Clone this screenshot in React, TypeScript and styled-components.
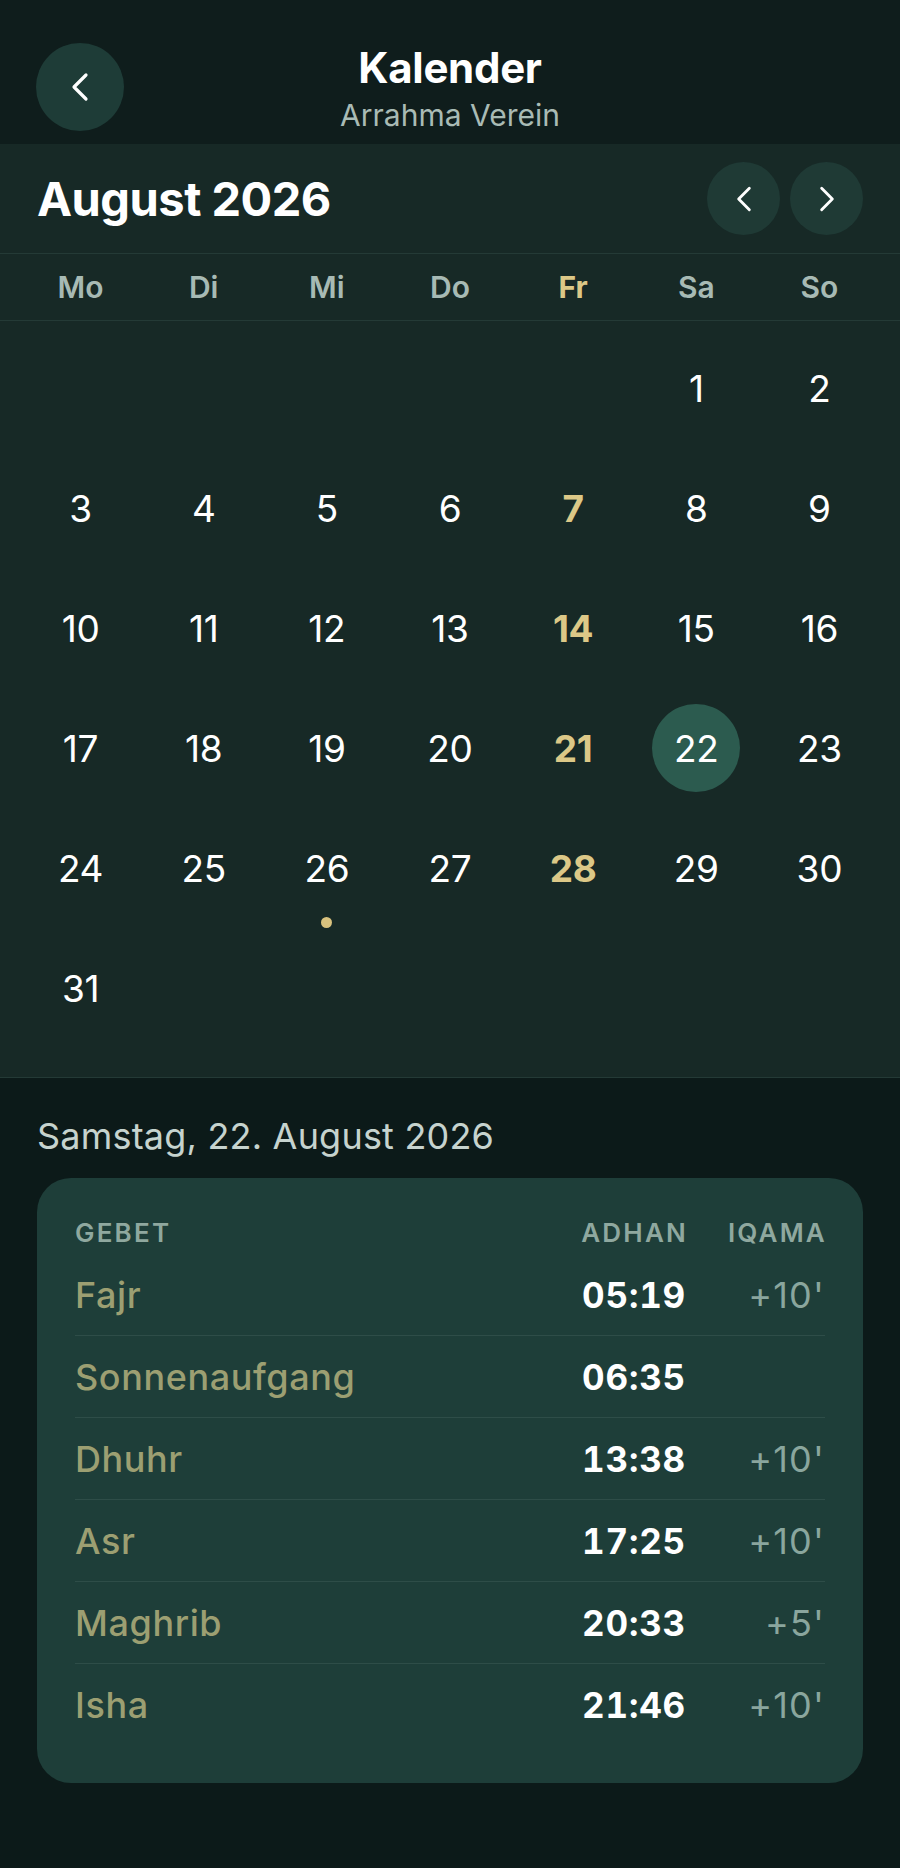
import React from "react"
import styled, { createGlobalStyle } from "styled-components"

const GlobalStyle = createGlobalStyle`
	html, body {
		margin: 0;
		padding: 0;
		background: #0c1a19;
	}
	body {
		font-family: Inter, "Noto Sans", "Liberation Sans", sans-serif;
		-webkit-font-smoothing: antialiased;
	}
	* {
		box-sizing: border-box;
	}
`

const Page = styled.div`
	width: 900px;
	min-height: 1868px;
	background: #0c1a19;
	color: #ffffff;
`

const Header = styled.header`
	height: 144px;
	display: grid;
	grid-template-columns: 88px 1fr 88px;
	align-items: start;
	padding: 43px 36px 0;
	background: #0f1d1c;
`

const CircleButton = styled.button<{ size: number; bg: string }>`
	width: ${(p) => p.size}px;
	height: ${(p) => p.size}px;
	border-radius: 50%;
	border: none;
	padding: 0;
	background: ${(p) => p.bg};
	display: flex;
	align-items: center;
	justify-content: center;
	color: #ffffff;
	cursor: pointer;
`

const TitleBlock = styled.div`
	display: flex;
	flex-direction: column;
	align-items: center;
	margin-top: 1px;
`

const Title = styled.h1`
	margin: 0;
	font-size: 42px;
	line-height: 48px;
	font-weight: 700;
	letter-spacing: -0.3px;
	color: #ffffff;
`

const Subtitle = styled.div`
	margin-top: 5px;
	font-size: 30px;
	line-height: 36px;
	font-weight: 400;
	color: #a9bbb5;
`

const CalendarSection = styled.section`
	background: #172926;
	border-bottom: 1px solid #243a36;
`

const MonthBar = styled.div`
	height: 110px;
	display: flex;
	align-items: center;
	justify-content: space-between;
	padding: 0 37px;
	border-bottom: 1px solid #243a36;
`

const MonthTitle = styled.h2`
	margin: 0;
	font-size: 47px;
	font-weight: 700;
	letter-spacing: -0.5px;
	color: #ffffff;
`

const NavGroup = styled.div`
	display: flex;
	gap: 10px;
`

const WeekRow = styled.div`
	height: 67px;
	display: grid;
	grid-template-columns: repeat(7, 1fr);
	align-items: center;
	padding: 0 19px;
	border-bottom: 1px solid #243a36;
`

const WeekDay = styled.div<{ friday?: boolean }>`
	text-align: center;
	font-size: 30px;
	font-weight: ${(p) => (p.friday ? 700 : 600)};
	color: ${(p) => (p.friday ? "#dcc887" : "#a7bab4")};
`

const DaysGrid = styled.div`
	display: grid;
	grid-template-columns: repeat(7, 1fr);
	grid-auto-rows: 120px;
	padding: 7px 19px 29px;
`

const DayCell = styled.div`
	position: relative;
	display: flex;
	align-items: center;
	justify-content: center;
`

const DayNumber = styled.div<{ friday?: boolean; selected?: boolean }>`
	width: 88px;
	height: 88px;
	border-radius: 50%;
	display: flex;
	align-items: center;
	justify-content: center;
	font-size: 37px;
	font-weight: ${(p) => (p.friday ? 700 : 400)};
	color: ${(p) => (p.friday ? "#dcc887" : "#ffffff")};
	background: ${(p) => (p.selected ? "#2c5b4f" : "transparent")};
	letter-spacing: -0.3px;
`

const EventDot = styled.span`
	position: absolute;
	left: 50%;
	top: calc(50% + 49px);
	width: 11px;
	height: 11px;
	margin-left: -5.5px;
	border-radius: 50%;
	background: #d9c27e;
`

const DetailSection = styled.section`
	padding: 37px 37px 0;
`

const DateLabel = styled.div`
	font-size: 36px;
	line-height: 42px;
	font-weight: 400;
	color: #c6d3ce;
	letter-spacing: 0.2px;
`

const PrayerCard = styled.div`
	margin-top: 21px;
	background: #1e3e39;
	border-radius: 34px;
	padding: 39px 38px 37px;
`

const PrayerGrid = styled.div`
	display: grid;
	grid-template-columns: 1fr 120px 139px;
	align-items: center;
`

const HeadCell = styled.div<{ right?: boolean }>`
	height: 37px;
	padding-bottom: 7px;
	display: flex;
	align-items: center;
	justify-content: ${(p) => (p.right ? "flex-end" : "flex-start")};
	font-size: 26px;
	font-weight: 600;
	letter-spacing: 2.2px;
	margin-right: ${(p) => (p.right ? "-2px" : "0")};
	color: #8fa89f;
`

const Cell = styled.div<{ right?: boolean; last?: boolean }>`
	height: 82px;
	display: flex;
	align-items: center;
	justify-content: ${(p) => (p.right ? "flex-end" : "flex-start")};
	border-bottom: ${(p) => (p.last ? "none" : "1px solid #2e4d48")};
`

const PrayerName = styled.span`
	font-size: 36px;
	font-weight: 500;
	letter-spacing: 0.6px;
	color: #9c9f72;
`

const AdhanTime = styled.span`
	font-size: 35px;
	font-weight: 700;
	letter-spacing: 0.8px;
	color: #ffffff;
	font-variant-numeric: tabular-nums;
`

const Iqama = styled.span`
	font-size: 36px;
	font-weight: 400;
	letter-spacing: 1.2px;
	color: #8aa69e;
`

const Chevron = ({ dir, w, h }: { dir: "left" | "right"; w: number; h: number }) => (
	<svg width={w} height={h} viewBox="0 0 18 30" fill="none">
		<polyline
			points={dir === "left" ? "15,3 3,15 15,27" : "3,3 15,15 3,27"}
			stroke="#ffffff"
			strokeWidth={3.2}
			strokeLinecap="round"
			strokeLinejoin="round"
		/>
	</svg>
)

const weekDays = ["Mo", "Di", "Mi", "Do", "Fr", "Sa", "So"]

const prayers = [
	{ name: "Fajr", adhan: "05:19", iqama: "+10'" },
	{ name: "Sonnenaufgang", adhan: "06:35", iqama: "" },
	{ name: "Dhuhr", adhan: "13:38", iqama: "+10'" },
	{ name: "Asr", adhan: "17:25", iqama: "+10'" },
	{ name: "Maghrib", adhan: "20:33", iqama: "+5'" },
	{ name: "Isha", adhan: "21:46", iqama: "+10'" },
]

// August 2026 starts on a Saturday
const leadingBlanks = 5
const daysInMonth = 31
const selectedDay = 22
const eventDays = [26]

export default function App() {
	const cells: (number | null)[] = [
		...Array.from({ length: leadingBlanks }, () => null),
		...Array.from({ length: daysInMonth }, (_, i) => i + 1),
	]

	return (
		<Page>
			<GlobalStyle />
			<Header>
				<CircleButton size={88} bg="#1e3c37" aria-label="Zurück">
					<Chevron dir="left" w={18} h={30} />
				</CircleButton>
				<TitleBlock>
					<Title>Kalender</Title>
					<Subtitle>Arrahma Verein</Subtitle>
				</TitleBlock>
				<div />
			</Header>

			<CalendarSection>
				<MonthBar>
					<MonthTitle>August 2026</MonthTitle>
					<NavGroup>
						<CircleButton size={73} bg="#1f3a35" aria-label="Vorheriger Monat">
							<Chevron dir="left" w={16} h={28} />
						</CircleButton>
						<CircleButton size={73} bg="#1f3a35" aria-label="Nächster Monat">
							<Chevron dir="right" w={16} h={28} />
						</CircleButton>
					</NavGroup>
				</MonthBar>

				<WeekRow>
					{weekDays.map((d) => (
						<WeekDay key={d} friday={d === "Fr"}>
							{d}
						</WeekDay>
					))}
				</WeekRow>

				<DaysGrid>
					{cells.map((day, i) => {
						if (day === null) return <DayCell key={`b${i}`} />
						const friday = i % 7 === 4
						return (
							<DayCell key={day}>
								<DayNumber friday={friday} selected={day === selectedDay}>
									{day}
								</DayNumber>
								{eventDays.includes(day) && <EventDot />}
							</DayCell>
						)
					})}
				</DaysGrid>
			</CalendarSection>

			<DetailSection>
				<DateLabel>Samstag, 22. August 2026</DateLabel>
				<PrayerCard>
					<PrayerGrid>
						<HeadCell>GEBET</HeadCell>
						<HeadCell right>ADHAN</HeadCell>
						<HeadCell right>IQAMA</HeadCell>
						{prayers.map((p, i) => {
							const last = i === prayers.length - 1
							return (
								<React.Fragment key={p.name}>
									<Cell last={last}>
										<PrayerName>{p.name}</PrayerName>
									</Cell>
									<Cell right last={last}>
										<AdhanTime>{p.adhan}</AdhanTime>
									</Cell>
									<Cell right last={last}>
										<Iqama>{p.iqama}</Iqama>
									</Cell>
								</React.Fragment>
							)
						})}
					</PrayerGrid>
				</PrayerCard>
			</DetailSection>
		</Page>
	)
}
